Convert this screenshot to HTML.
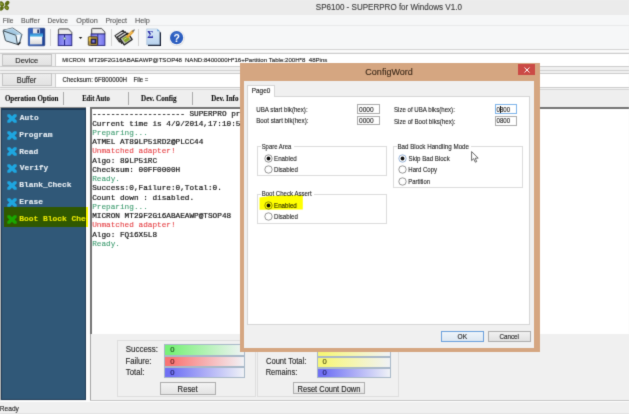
<!DOCTYPE html>
<html><head><meta charset="utf-8">
<style>
*{margin:0;padding:0;box-sizing:border-box}
html,body{width:629px;height:414px;overflow:hidden;background:#f0f0f0;font-family:"Liberation Sans",sans-serif;position:relative}
.a{position:absolute;white-space:nowrap}
svg text{white-space:pre}
</style></head><body><svg width="0" height="0" style="position:absolute"><filter id="bl" x="0" y="0" width="100%" height="100%" color-interpolation-filters="sRGB"><feConvolveMatrix order="3" kernelMatrix="0.0144 0.0912 0.0144 0.0912 0.5776 0.0912 0.0144 0.0912 0.0144" edgeMode="duplicate" preserveAlpha="true"/></filter></svg><div class="a" style="left:-4px;top:-4px;width:637px;height:422px;background:#f0f0f0;filter:url(#bl)"><div class="a" style="left:4px;top:4px;width:629px;height:414px;overflow:hidden">
<div class="a" style="left:0px;top:0px;width:629px;height:14.5px;background:#ebebeb;"></div>
<svg class="a" style="left:0;top:0" width="11" height="12" viewBox="0 0 11 12">
<ellipse cx="1.6" cy="4" rx="2.9" ry="2.2" transform="rotate(45 1.6 4)" fill="#5c6c14"/>
<ellipse cx="7.2" cy="3.2" rx="2.6" ry="1.9" transform="rotate(-45 7.2 3.2)" fill="#5c6c14"/>
<ellipse cx="1.4" cy="8.4" rx="2.6" ry="2" transform="rotate(-45 1.4 8.4)" fill="#5c6c14"/>
<ellipse cx="6.6" cy="7.6" rx="2.7" ry="2.1" transform="rotate(45 6.6 7.6)" fill="#5c6c14"/>
<ellipse cx="1.6" cy="4" rx="1.4" ry="1" transform="rotate(45 1.6 4)" fill="#8c9c2c"/>
<ellipse cx="6.6" cy="7.6" rx="1.3" ry="0.9" transform="rotate(45 6.6 7.6)" fill="#8c9c2c"/>
</svg>
<svg class="a" style="left:0;top:0;overflow:visible" width="1" height="1"><text transform="translate(315.78,9.50) scale(0.882,1)" font-family="Liberation Sans" font-weight="normal" font-size="9.13" fill="#3a3a3a" stroke="#3a3a3a" stroke-width="0.2" stroke-opacity="0.6" xml:space="preserve">SP6100 - SUPERPRO for Windows V1.0</text></svg>
<div class="a" style="left:0px;top:14.5px;width:629px;height:11px;background:#f6f7f8;"></div>
<div class="a" style="left:0px;top:25.3px;width:629px;height:1px;background:#e9eaeb;"></div>
<svg class="a" style="left:0;top:0;overflow:visible" width="1" height="1"><text transform="translate(2.67,23.20) scale(0.896,1)" font-family="Liberation Sans" font-weight="normal" font-size="7.39" fill="#5c5c5c" stroke="#5c5c5c" stroke-width="0.2" stroke-opacity="0.6" xml:space="preserve">File</text></svg>
<svg class="a" style="left:0;top:0;overflow:visible" width="1" height="1"><text transform="translate(21.03,23.20) scale(0.958,1)" font-family="Liberation Sans" font-weight="normal" font-size="7.39" fill="#5c5c5c" stroke="#5c5c5c" stroke-width="0.2" stroke-opacity="0.6" xml:space="preserve">Buffer</text></svg>
<svg class="a" style="left:0;top:0;overflow:visible" width="1" height="1"><text transform="translate(47.57,23.20) scale(0.902,1)" font-family="Liberation Sans" font-weight="normal" font-size="7.39" fill="#5c5c5c" stroke="#5c5c5c" stroke-width="0.2" stroke-opacity="0.6" xml:space="preserve">Device</text></svg>
<svg class="a" style="left:0;top:0;overflow:visible" width="1" height="1"><text transform="translate(76.31,23.20) scale(0.987,1)" font-family="Liberation Sans" font-weight="normal" font-size="7.39" fill="#5c5c5c" stroke="#5c5c5c" stroke-width="0.2" stroke-opacity="0.6" xml:space="preserve">Option</text></svg>
<svg class="a" style="left:0;top:0;overflow:visible" width="1" height="1"><text transform="translate(105.45,23.20) scale(0.936,1)" font-family="Liberation Sans" font-weight="normal" font-size="7.39" fill="#5c5c5c" stroke="#5c5c5c" stroke-width="0.2" stroke-opacity="0.6" xml:space="preserve">Project</text></svg>
<svg class="a" style="left:0;top:0;overflow:visible" width="1" height="1"><text transform="translate(134.92,23.20) scale(0.983,1)" font-family="Liberation Sans" font-weight="normal" font-size="7.39" fill="#5c5c5c" stroke="#5c5c5c" stroke-width="0.2" stroke-opacity="0.6" xml:space="preserve">Help</text></svg>
<div class="a" style="left:0px;top:26px;width:629px;height:23px;background:#f6f7f8;"></div>
<div class="a" style="left:0px;top:49px;width:629px;height:1px;background:#d4d4d4;"></div>
<div class="a" style="left:0px;top:50px;width:629px;height:1.5px;background:#fbfbfb;"></div>
<!-- toolbar icons -->
<svg class="a" style="left:0;top:26px" width="24" height="22" viewBox="0 0 24 22">
<path d="M2.9 4.5L3.7 3.9L6.9 3.4L12.2 2Q12.7 1.9 13.1 2.2L21.6 8Q22 8.3 21.9 8.8L20 15.9L17.5 18.3Z" fill="#a4c9e2" stroke="#46525c" stroke-width="0.85" stroke-linejoin="round"/>
<path d="M15.4 9L20.7 8.5L18.9 15.7L17.2 17.4Z" fill="#f6fbff"/><path d="M5 4.3L12.3 2.7L20 8" fill="none" stroke="#d8ecf8" stroke-width="0.7"/>
<path d="M3.5 4.9Q3 4.8 3.2 5.4L5.4 14.2Q5.6 14.7 6.1 14.9L17.4 18.4L16 9.7Q15.9 9.3 15.4 9.1Z" fill="#c4dff0" stroke="#36414a" stroke-width="0.95" stroke-linejoin="round"/>
<path d="M17.2 18.7L20.2 15.4L20.8 17L18.2 19.6Z" fill="#1c1c1c"/>
</svg>
<svg class="a" style="left:26px;top:26px" width="22" height="22" viewBox="0 0 22 22">
<defs><linearGradient id="fl" x1="0" x2="1"><stop offset="0" stop-color="#3a6ac8"/><stop offset="1" stop-color="#1a3e90"/></linearGradient>
<linearGradient id="fm" x1="0" y1="0" x2="0" y2="1"><stop offset="0" stop-color="#2a78c8"/><stop offset="1" stop-color="#58c8f0"/></linearGradient>
<linearGradient id="flb" x1="0" y1="0" x2="0" y2="1"><stop offset="0" stop-color="#ffffff"/><stop offset="1" stop-color="#d8d8d8"/></linearGradient></defs>
<rect x="2.3" y="2.2" width="16.5" height="17.6" rx="0.8" fill="url(#fl)" stroke="#16307a" stroke-width="0.6"/>
<rect x="4" y="7.2" width="13" height="3.6" fill="url(#fm)"/>
<rect x="6.9" y="2.4" width="6.8" height="5" fill="#e6e6ea"/>
<rect x="11.3" y="3.5" width="1.7" height="3.5" fill="#2a3a6a"/>
<rect x="4" y="10.6" width="12.2" height="7.8" fill="url(#flb)"/>
</svg>
<div class="a" style="left:50px;top:29px;width:1px;height:17px;background:#d2d2d2"></div>
<svg class="a" style="left:54px;top:26px" width="22" height="22" viewBox="0 0 22 22">
<defs><linearGradient id="pb" x1="0" x2="1"><stop offset="0" stop-color="#7070e8"/><stop offset="0.5" stop-color="#9a9af8"/><stop offset="1" stop-color="#7474ec"/></linearGradient></defs>
<path d="M4.4 8.8L4.4 3.8Q4.4 2.9 5.3 2.9L14.6 2.9L17.8 6.4L17.8 8.8Z" fill="#d4d4d4" stroke="#333" stroke-width="0.8" stroke-linejoin="round"/>
<path d="M5.6 3.9L14.2 3.9L16.6 6.6L16.6 7.8L5.6 7.8Z" fill="#ececec"/>
<rect x="4.2" y="8.7" width="13.6" height="10.9" fill="url(#pb)" stroke="#20207a" stroke-width="0.9"/>
<path d="M10.6 8.8L10.6 19.5" stroke="#1a1a8a" stroke-width="1"/>
<circle cx="10.6" cy="12.5" r="1.2" fill="#d8f0d8" stroke="#20505a" stroke-width="0.4"/>
</svg>
<svg class="a" style="left:78px;top:36px" width="5" height="4" viewBox="0 0 5 4"><path d="M0.8 1L4.3 1L2.55 3.1Z" fill="#1a1a1a"/></svg>
<svg class="a" style="left:85px;top:26px" width="22" height="22" viewBox="0 0 22 22">
<path d="M6.6 8.2L6.6 3.3Q6.6 2.4 7.5 2.4L16.6 2.4L19.9 5.9L19.9 8.2Z" fill="#d4d4d4" stroke="#333" stroke-width="0.8" stroke-linejoin="round"/>
<path d="M7.8 3.4L16.2 3.4L18.7 6.1L18.7 7.3L7.8 7.3Z" fill="#ececec"/>
<rect x="6.1" y="8" width="13.8" height="11.4" fill="url(#pb)" stroke="#20207a" stroke-width="0.9"/>
<path d="M12.8 8.1L12.8 19.3" stroke="#1a1a8a" stroke-width="0.9"/>
<rect x="3.3" y="10.8" width="9" height="8.5" rx="0.6" fill="#b89848" stroke="#3a3010" stroke-width="0.8"/>
<rect x="3.8" y="11.3" width="2.2" height="4" fill="#e8c040"/>
<rect x="6" y="13" width="5" height="4.6" fill="#2a2a70" stroke="#111" stroke-width="0.5"/>
<rect x="7.3" y="14.2" width="2.3" height="2.2" fill="#8a8ae0"/>
</svg>
<div class="a" style="left:110.5px;top:29px;width:1px;height:17px;background:#d2d2d2"></div>
<svg class="a" style="left:113px;top:26px" width="24" height="22" viewBox="0 0 24 22">
<path d="M2 9.6L10 4.4L14.2 10.4L6.4 16Z" fill="#e4e4e4" stroke="#262626" stroke-width="1.1" stroke-linejoin="round"/>
<path d="M4.3 11L12.3 5.8L16.5 11.8L8.7 17.4Z" fill="#d4d4d4" stroke="#262626" stroke-width="1.1" stroke-linejoin="round"/>
<path d="M6.8 12.4L14.8 7.2L19.2 13.4L11.2 18.9Z" fill="#bcbcbc" stroke="#1e1e1e" stroke-width="1.2" stroke-linejoin="round"/>
<path d="M9.4 12.6L14.2 9.5L17 13.4L12.2 16.6Z" fill="#88a82a"/>
<path d="M10.8 13.6L13.6 11.8" stroke="#d8e890" stroke-width="0.8"/>
<path d="M14.6 10.4L19.6 5.6" stroke="#e6a232" stroke-width="2.8" stroke-linecap="round"/>
<path d="M15 9.6L18.8 6" stroke="#f6d070" stroke-width="0.9"/>
<path d="M19.8 5.2L21.2 3.9" stroke="#707070" stroke-width="1.3" stroke-linecap="round"/>
</svg>
<div class="a" style="left:138.2px;top:29px;width:1px;height:17px;background:#d2d2d2"></div>
<svg class="a" style="left:143px;top:26px" width="20" height="22" viewBox="0 0 20 22">
<defs><linearGradient id="sg" x1="0" y1="0" x2="0" y2="1"><stop offset="0" stop-color="#dceaf8"/><stop offset="1" stop-color="#b8d2ee"/></linearGradient></defs>
<path d="M5 4L15.2 4L18 6.8L18 20L5 20Z" fill="#0e1428"/>
<path d="M3.7 2.9L14.3 2.9L16.7 5.3L16.7 18.8L3.7 18.8Z" fill="url(#sg)" stroke="#8aa8c8" stroke-width="0.4"/>
<path d="M14.3 2.9L16.7 5.3L14.3 5.3Z" fill="#5a9ad8"/>
<text x="4.3" y="11.6" font-family="Liberation Serif" font-weight="bold" font-size="9.5" fill="#2828a8">&#931;</text>
</svg>
<svg class="a" style="left:167px;top:28px" width="20" height="20" viewBox="0 0 20 20">
<circle cx="9.8" cy="10" r="8" fill="#dcdcdc"/>
<circle cx="9.6" cy="9.7" r="7.6" fill="#f8f8f8"/>
<circle cx="9.6" cy="9.7" r="6.6" fill="#2c5ec0"/>
<path d="M5 6.5Q9.6 2.5 14.2 6.5Q9.6 5 5 6.5Z" fill="#5a88d8" opacity="0.6"/>
<text x="9.6" y="13.8" text-anchor="middle" font-family="Liberation Sans" font-weight="bold" font-size="10.5" fill="#fff">?</text>
</svg>

<div class="a" style="left:0px;top:53.3px;width:629px;height:1px;background:#cdcdcd;"></div>
<div class="a" style="left:0px;top:66.3px;width:629px;height:1px;background:#cdcdcd;"></div>
<div class="a" style="left:0px;top:69.5px;width:629px;height:1px;background:#d2d2d2;"></div>
<div class="a" style="left:0px;top:73px;width:629px;height:1px;background:#cdcdcd;"></div>
<div class="a" style="left:0px;top:86.5px;width:629px;height:1px;background:#cdcdcd;"></div>
<div class="a" style="left:0px;top:89.3px;width:629px;height:1px;background:#d6d6d6;"></div>
<div class="a" style="left:55.5px;top:54px;width:573.5px;height:12.3px;background:#fff;"></div>
<div class="a" style="left:55.5px;top:74px;width:573.5px;height:12.5px;background:#fff;"></div>
<div class="a" style="left:55px;top:53px;width:1px;height:14px;background:#cdcdcd;"></div>
<div class="a" style="left:55px;top:73px;width:1px;height:14px;background:#cdcdcd;"></div>
<div class="a" style="left:2px;top:54px;width:50px;height:12.400000000000006px;background:linear-gradient(#ececec,#e2e2e2);border:1px solid #c4c4c4"></div>
<div class="a" style="left:2px;top:73.2px;width:50px;height:12.5px;background:linear-gradient(#ececec,#e2e2e2);border:1px solid #c4c4c4"></div>
<svg class="a" style="left:0;top:0;overflow:visible" width="1" height="1"><text transform="translate(15.30,63.00) scale(0.939,1)" font-family="Liberation Sans" font-weight="normal" font-size="7.97" fill="#262626" stroke="#262626" stroke-width="0.2" stroke-opacity="0.6" xml:space="preserve">Device</text></svg>
<svg class="a" style="left:0;top:0;overflow:visible" width="1" height="1"><text transform="translate(16.81,82.70) scale(0.890,1)" font-family="Liberation Sans" font-weight="normal" font-size="8.26" fill="#262626" stroke="#262626" stroke-width="0.2" stroke-opacity="0.6" xml:space="preserve">Buffer</text></svg>
<svg class="a" style="left:0;top:0;overflow:visible" width="1" height="1"><text transform="translate(62.34,62.40) scale(0.913,1)" font-family="Liberation Sans" font-weight="normal" font-size="6.23" fill="#1a1a1a" stroke="#1a1a1a" stroke-width="0.2" stroke-opacity="0.6" xml:space="preserve">MICRON</text></svg>
<svg class="a" style="left:0;top:0;overflow:visible" width="1" height="1"><text transform="translate(88.41,62.40) scale(0.978,1)" font-family="Liberation Sans" font-weight="normal" font-size="6.23" fill="#1a1a1a" stroke="#1a1a1a" stroke-width="0.2" stroke-opacity="0.6" xml:space="preserve">MT29F2G16ABAEAWP@TSOP48</text></svg>
<svg class="a" style="left:0;top:0;overflow:visible" width="1" height="1"><text transform="translate(184.91,62.40) scale(0.982,1)" font-family="Liberation Sans" font-weight="normal" font-size="6.23" fill="#1a1a1a" stroke="#1a1a1a" stroke-width="0.2" stroke-opacity="0.6" xml:space="preserve">NAND:8400000H*16+Partition Table:200H*8  48Pins</text></svg>
<svg class="a" style="left:0;top:0;overflow:visible" width="1" height="1"><text transform="translate(62.50,82.10) scale(0.893,1)" font-family="Liberation Sans" font-weight="normal" font-size="6.81" fill="#1a1a1a" stroke="#1a1a1a" stroke-width="0.2" stroke-opacity="0.6" xml:space="preserve">Checksum:</text></svg>
<svg class="a" style="left:0;top:0;overflow:visible" width="1" height="1"><text transform="translate(94.59,82.10) scale(0.915,1)" font-family="Liberation Sans" font-weight="normal" font-size="6.81" fill="#1a1a1a" stroke="#1a1a1a" stroke-width="0.2" stroke-opacity="0.6" xml:space="preserve">6F800000H</text></svg>
<svg class="a" style="left:0;top:0;overflow:visible" width="1" height="1"><text transform="translate(133.52,82.10) scale(0.875,1)" font-family="Liberation Sans" font-weight="normal" font-size="6.81" fill="#1a1a1a" stroke="#1a1a1a" stroke-width="0.2" stroke-opacity="0.6" xml:space="preserve">File =</text></svg>
<div class="a" style="left:0px;top:89.8px;width:629px;height:17.5px;background:#efefef;"></div>
<div class="a" style="left:63px;top:92px;width:1px;height:12.5px;background:#a9a9a9;"></div>
<div class="a" style="left:127.5px;top:92px;width:1px;height:12.5px;background:#a9a9a9;"></div>
<div class="a" style="left:191.5px;top:92px;width:1px;height:12.5px;background:#a9a9a9;"></div>
<svg class="a" style="left:0;top:0;overflow:visible" width="1" height="1"><text transform="translate(4.92,100.80) scale(0.931,1)" font-family="Liberation Serif" font-weight="bold" font-size="7.54" fill="#111" stroke="#111" stroke-width="0.2" stroke-opacity="0.6" xml:space="preserve">Operation Option</text></svg>
<svg class="a" style="left:0;top:0;overflow:visible" width="1" height="1"><text transform="translate(82.13,100.80) scale(0.887,1)" font-family="Liberation Serif" font-weight="bold" font-size="7.54" fill="#111" stroke="#111" stroke-width="0.2" stroke-opacity="0.6" xml:space="preserve">Edit Auto</text></svg>
<svg class="a" style="left:0;top:0;overflow:visible" width="1" height="1"><text transform="translate(141.03,100.80) scale(0.946,1)" font-family="Liberation Serif" font-weight="bold" font-size="7.54" fill="#111" stroke="#111" stroke-width="0.2" stroke-opacity="0.6" xml:space="preserve">Dev. Config</text></svg>
<svg class="a" style="left:0;top:0;overflow:visible" width="1" height="1"><text transform="translate(211.33,100.80) scale(0.924,1)" font-family="Liberation Serif" font-weight="bold" font-size="7.54" fill="#111" stroke="#111" stroke-width="0.2" stroke-opacity="0.6" xml:space="preserve">Dev. Info</text></svg>
<div class="a" style="left:0px;top:107px;width:86px;height:1px;background:#8c8c8c;"></div>
<div class="a" style="left:0px;top:107px;width:1px;height:293px;background:#a8a8a8;"></div>
<div class="a" style="left:1px;top:108px;width:85px;height:291.8px;background:#305878;border:1px solid #203c58;border-top:2px solid #1e3852"></div>
<svg class="a" style="left:6.7px;top:113.7px" width="10" height="9" viewBox="0 0 10 9"><path d="M0.3 0.8Q0.3 0.2 1 0.2L3 0.2L5 2.3L7 0.2L9 0.2Q9.7 0.2 9.7 0.8L9.7 2.6L7.6 4.5L9.7 6.4L9.7 8.2Q9.7 8.8 9 8.8L7 8.8L5 6.7L3 8.8L1 8.8Q0.3 8.8 0.3 8.2L0.3 6.4L2.4 4.5L0.3 2.6Z" fill="#1ea6e0"/></svg>
<svg class="a" style="left:0;top:0;overflow:visible" width="1" height="1"><text transform="translate(19.70,120.00) scale(1.000,1)" font-family="Liberation Mono" font-weight="bold" font-size="7.91" fill="#e8eef4" stroke="#e8eef4" stroke-width="0.2" stroke-opacity="0.6" xml:space="preserve">Auto</text></svg>
<svg class="a" style="left:6.7px;top:130.5px" width="10" height="9" viewBox="0 0 10 9"><path d="M0.3 0.8Q0.3 0.2 1 0.2L3 0.2L5 2.3L7 0.2L9 0.2Q9.7 0.2 9.7 0.8L9.7 2.6L7.6 4.5L9.7 6.4L9.7 8.2Q9.7 8.8 9 8.8L7 8.8L5 6.7L3 8.8L1 8.8Q0.3 8.8 0.3 8.2L0.3 6.4L2.4 4.5L0.3 2.6Z" fill="#1ea6e0"/></svg>
<svg class="a" style="left:0;top:0;overflow:visible" width="1" height="1"><text transform="translate(19.23,136.80) scale(1.000,1)" font-family="Liberation Mono" font-weight="bold" font-size="7.91" fill="#e8eef4" stroke="#e8eef4" stroke-width="0.2" stroke-opacity="0.6" xml:space="preserve">Program</text></svg>
<svg class="a" style="left:6.7px;top:147.3px" width="10" height="9" viewBox="0 0 10 9"><path d="M0.3 0.8Q0.3 0.2 1 0.2L3 0.2L5 2.3L7 0.2L9 0.2Q9.7 0.2 9.7 0.8L9.7 2.6L7.6 4.5L9.7 6.4L9.7 8.2Q9.7 8.8 9 8.8L7 8.8L5 6.7L3 8.8L1 8.8Q0.3 8.8 0.3 8.2L0.3 6.4L2.4 4.5L0.3 2.6Z" fill="#1ea6e0"/></svg>
<svg class="a" style="left:0;top:0;overflow:visible" width="1" height="1"><text transform="translate(19.23,153.60) scale(1.000,1)" font-family="Liberation Mono" font-weight="bold" font-size="7.91" fill="#e8eef4" stroke="#e8eef4" stroke-width="0.2" stroke-opacity="0.6" xml:space="preserve">Read</text></svg>
<svg class="a" style="left:6.7px;top:164.1px" width="10" height="9" viewBox="0 0 10 9"><path d="M0.3 0.8Q0.3 0.2 1 0.2L3 0.2L5 2.3L7 0.2L9 0.2Q9.7 0.2 9.7 0.8L9.7 2.6L7.6 4.5L9.7 6.4L9.7 8.2Q9.7 8.8 9 8.8L7 8.8L5 6.7L3 8.8L1 8.8Q0.3 8.8 0.3 8.2L0.3 6.4L2.4 4.5L0.3 2.6Z" fill="#1ea6e0"/></svg>
<svg class="a" style="left:0;top:0;overflow:visible" width="1" height="1"><text transform="translate(19.70,170.40) scale(1.000,1)" font-family="Liberation Mono" font-weight="bold" font-size="7.91" fill="#e8eef4" stroke="#e8eef4" stroke-width="0.2" stroke-opacity="0.6" xml:space="preserve">Verify</text></svg>
<svg class="a" style="left:6.7px;top:180.9px" width="10" height="9" viewBox="0 0 10 9"><path d="M0.3 0.8Q0.3 0.2 1 0.2L3 0.2L5 2.3L7 0.2L9 0.2Q9.7 0.2 9.7 0.8L9.7 2.6L7.6 4.5L9.7 6.4L9.7 8.2Q9.7 8.8 9 8.8L7 8.8L5 6.7L3 8.8L1 8.8Q0.3 8.8 0.3 8.2L0.3 6.4L2.4 4.5L0.3 2.6Z" fill="#1ea6e0"/></svg>
<svg class="a" style="left:0;top:0;overflow:visible" width="1" height="1"><text transform="translate(19.23,187.20) scale(1.000,1)" font-family="Liberation Mono" font-weight="bold" font-size="7.91" fill="#e8eef4" stroke="#e8eef4" stroke-width="0.2" stroke-opacity="0.6" xml:space="preserve">Blank_Check</text></svg>
<svg class="a" style="left:6.7px;top:197.7px" width="10" height="9" viewBox="0 0 10 9"><path d="M0.3 0.8Q0.3 0.2 1 0.2L3 0.2L5 2.3L7 0.2L9 0.2Q9.7 0.2 9.7 0.8L9.7 2.6L7.6 4.5L9.7 6.4L9.7 8.2Q9.7 8.8 9 8.8L7 8.8L5 6.7L3 8.8L1 8.8Q0.3 8.8 0.3 8.2L0.3 6.4L2.4 4.5L0.3 2.6Z" fill="#1ea6e0"/></svg>
<svg class="a" style="left:0;top:0;overflow:visible" width="1" height="1"><text transform="translate(19.23,204.00) scale(1.000,1)" font-family="Liberation Mono" font-weight="bold" font-size="7.91" fill="#e8eef4" stroke="#e8eef4" stroke-width="0.2" stroke-opacity="0.6" xml:space="preserve">Erase</text></svg>
<svg class="a" style="left:6.7px;top:214.5px" width="10" height="9" viewBox="0 0 10 9"><path d="M0.3 0.8Q0.3 0.2 1 0.2L3 0.2L5 2.3L7 0.2L9 0.2Q9.7 0.2 9.7 0.8L9.7 2.6L7.6 4.5L9.7 6.4L9.7 8.2Q9.7 8.8 9 8.8L7 8.8L5 6.7L3 8.8L1 8.8Q0.3 8.8 0.3 8.2L0.3 6.4L2.4 4.5L0.3 2.6Z" fill="#1aa61a"/></svg>
<svg class="a" style="left:0;top:0;overflow:visible" width="1" height="1"><text transform="translate(19.23,220.80) scale(1.000,1)" font-family="Liberation Mono" font-weight="bold" font-size="7.91" fill="#e8e800" stroke="#e8e800" stroke-width="0.2" stroke-opacity="0.6" xml:space="preserve">Boot Block Che</text></svg>
<div class="a" style="left:86px;top:107px;width:4px;height:293.5px;background:#fbfbfb;"></div>
<div class="a" style="left:4px;top:207.3px;width:84px;height:19.5px;background:#ffff00;mix-blend-mode:multiply"></div>
<div class="a" style="left:90px;top:107.2px;width:539px;height:226.6px;background:#fff;border-left:2px solid #747474;border-top:2px solid #747474"></div>
<div class="a" style="left:92.2px;top:110.30px;font-family:&quot;Liberation Mono&quot;,monospace;font-size:7.73px;line-height:9px;white-space:pre;-webkit-text-stroke:0.2px;color:#151515">-------------------- SUPERPRO pr</div>
<div class="a" style="left:92.2px;top:119.56px;font-family:&quot;Liberation Mono&quot;,monospace;font-size:7.73px;line-height:9px;white-space:pre;-webkit-text-stroke:0.2px;color:#151515">Current time is 4/9/2014,17:10:5</div>
<div class="a" style="left:92.2px;top:128.82px;font-family:&quot;Liberation Mono&quot;,monospace;font-size:7.73px;line-height:9px;white-space:pre;-webkit-text-stroke:0.08px;color:#3c9a6e">Preparing...</div>
<div class="a" style="left:92.2px;top:138.08px;font-family:&quot;Liberation Mono&quot;,monospace;font-size:7.73px;line-height:9px;white-space:pre;-webkit-text-stroke:0.2px;color:#151515">ATMEL AT89LP51RD2@PLCC44</div>
<div class="a" style="left:92.2px;top:147.34px;font-family:&quot;Liberation Mono&quot;,monospace;font-size:7.73px;line-height:9px;white-space:pre;-webkit-text-stroke:0.08px;color:#e43a3e">Unmatched adapter!</div>
<div class="a" style="left:92.2px;top:156.60px;font-family:&quot;Liberation Mono&quot;,monospace;font-size:7.73px;line-height:9px;white-space:pre;-webkit-text-stroke:0.2px;color:#151515">Algo: 89LP51RC</div>
<div class="a" style="left:92.2px;top:165.86px;font-family:&quot;Liberation Mono&quot;,monospace;font-size:7.73px;line-height:9px;white-space:pre;-webkit-text-stroke:0.2px;color:#151515">Checksum: 00FF0000H</div>
<div class="a" style="left:92.2px;top:175.12px;font-family:&quot;Liberation Mono&quot;,monospace;font-size:7.73px;line-height:9px;white-space:pre;-webkit-text-stroke:0.08px;color:#3c9a6e">Ready.</div>
<div class="a" style="left:92.2px;top:184.38px;font-family:&quot;Liberation Mono&quot;,monospace;font-size:7.73px;line-height:9px;white-space:pre;-webkit-text-stroke:0.2px;color:#151515">Success:0,Failure:0,Total:0.</div>
<div class="a" style="left:92.2px;top:193.64px;font-family:&quot;Liberation Mono&quot;,monospace;font-size:7.73px;line-height:9px;white-space:pre;-webkit-text-stroke:0.2px;color:#151515">Count down : disabled.</div>
<div class="a" style="left:92.2px;top:202.90px;font-family:&quot;Liberation Mono&quot;,monospace;font-size:7.73px;line-height:9px;white-space:pre;-webkit-text-stroke:0.08px;color:#3c9a6e">Preparing...</div>
<div class="a" style="left:92.2px;top:212.16px;font-family:&quot;Liberation Mono&quot;,monospace;font-size:7.73px;line-height:9px;white-space:pre;-webkit-text-stroke:0.2px;color:#151515">MICRON MT29F2G16ABAEAWP@TSOP48</div>
<div class="a" style="left:92.2px;top:221.42px;font-family:&quot;Liberation Mono&quot;,monospace;font-size:7.73px;line-height:9px;white-space:pre;-webkit-text-stroke:0.08px;color:#e43a3e">Unmatched adapter!</div>
<div class="a" style="left:92.2px;top:230.68px;font-family:&quot;Liberation Mono&quot;,monospace;font-size:7.73px;line-height:9px;white-space:pre;-webkit-text-stroke:0.2px;color:#151515">Algo: FQ16X5L8</div>
<div class="a" style="left:92.2px;top:239.94px;font-family:&quot;Liberation Mono&quot;,monospace;font-size:7.73px;line-height:9px;white-space:pre;-webkit-text-stroke:0.08px;color:#3c9a6e">Ready.</div>
<div class="a" style="left:90px;top:333.8px;width:539px;height:67px;background:#f0f0f0;border-left:1px solid #a4a4a4"></div>
<div class="a" style="left:117px;top:340.3px;width:138.5px;height:57px;background:transparent;border:1px solid #dedede"></div>
<div class="a" style="left:257px;top:340.3px;width:141.5px;height:57px;background:transparent;border:1px solid #dedede"></div>
<div class="a" style="left:164.2px;top:344.2px;width:80.5px;height:11.5px;background:linear-gradient(to right,#78f078 0%,#78f078 8%,color-mix(in srgb,#78f078 55%,#f4f4f8) 50%,#f0f2f6 100%);border:1px solid #a8b8c8"></div>
<div class="a" style="left:164.2px;top:355.7px;width:80.5px;height:11.7px;background:linear-gradient(to right,#f87474 0%,#f87474 8%,color-mix(in srgb,#f87474 55%,#f4f4f8) 50%,#f0f2f6 100%);border:1px solid #a8b8c8"></div>
<div class="a" style="left:164.2px;top:367.4px;width:80.5px;height:11px;background:linear-gradient(to right,#7070f4 0%,#7070f4 8%,color-mix(in srgb,#7070f4 55%,#f4f4f8) 50%,#f0f2f6 100%);border:1px solid #a8b8c8"></div>
<div class="a" style="left:317.4px;top:345px;width:73.2px;height:11.7px;background:linear-gradient(to right,#f6f678 0%,#f6f678 8%,color-mix(in srgb,#f6f678 55%,#f4f4f8) 50%,#f0f2f6 100%);border:1px solid #a8b8c8"></div>
<div class="a" style="left:317.4px;top:356.7px;width:73.2px;height:11.1px;background:linear-gradient(to right,#f6f678 0%,#f6f678 8%,color-mix(in srgb,#f6f678 55%,#f4f4f8) 50%,#f0f2f6 100%);border:1px solid #a8b8c8"></div>
<div class="a" style="left:317.4px;top:367.8px;width:73.2px;height:10.5px;background:linear-gradient(to right,#7070f4 0%,#7070f4 8%,color-mix(in srgb,#7070f4 55%,#f4f4f8) 50%,#f0f2f6 100%);border:1px solid #a8b8c8"></div>
<svg class="a" style="left:0;top:0;overflow:visible" width="1" height="1"><text transform="translate(125.68,352.10) scale(0.951,1)" font-family="Liberation Sans" font-weight="normal" font-size="8.41" fill="#262626" stroke="#262626" stroke-width="0.2" stroke-opacity="0.6" xml:space="preserve">Success:</text></svg>
<svg class="a" style="left:0;top:0;overflow:visible" width="1" height="1"><text transform="translate(125.38,363.90) scale(0.928,1)" font-family="Liberation Sans" font-weight="normal" font-size="8.41" fill="#262626" stroke="#262626" stroke-width="0.2" stroke-opacity="0.6" xml:space="preserve">Failure:</text></svg>
<svg class="a" style="left:0;top:0;overflow:visible" width="1" height="1"><text transform="translate(125.84,375.30) scale(0.923,1)" font-family="Liberation Sans" font-weight="normal" font-size="8.41" fill="#262626" stroke="#262626" stroke-width="0.2" stroke-opacity="0.6" xml:space="preserve">Total:</text></svg>
<svg class="a" style="left:0;top:0;overflow:visible" width="1" height="1"><text transform="translate(265.92,363.90) scale(0.891,1)" font-family="Liberation Sans" font-weight="normal" font-size="8.55" fill="#262626" stroke="#262626" stroke-width="0.2" stroke-opacity="0.6" xml:space="preserve">Count Total:</text></svg>
<svg class="a" style="left:0;top:0;overflow:visible" width="1" height="1"><text transform="translate(265.70,375.30) scale(0.879,1)" font-family="Liberation Sans" font-weight="normal" font-size="8.55" fill="#262626" stroke="#262626" stroke-width="0.2" stroke-opacity="0.6" xml:space="preserve">Remains:</text></svg>
<svg class="a" style="left:0;top:0;overflow:visible" width="1" height="1"><text transform="translate(170.27,352.10) scale(1.000,1)" font-family="Liberation Sans" font-weight="normal" font-size="7.68" fill="#1a4a1a" stroke="#1a4a1a" stroke-width="0.2" stroke-opacity="0.6" xml:space="preserve">0</text></svg>
<svg class="a" style="left:0;top:0;overflow:visible" width="1" height="1"><text transform="translate(170.27,363.90) scale(1.000,1)" font-family="Liberation Sans" font-weight="normal" font-size="7.68" fill="#5a1a1a" stroke="#5a1a1a" stroke-width="0.2" stroke-opacity="0.6" xml:space="preserve">0</text></svg>
<svg class="a" style="left:0;top:0;overflow:visible" width="1" height="1"><text transform="translate(170.27,375.30) scale(1.000,1)" font-family="Liberation Sans" font-weight="normal" font-size="7.68" fill="#1a1a5a" stroke="#1a1a5a" stroke-width="0.2" stroke-opacity="0.6" xml:space="preserve">0</text></svg>
<svg class="a" style="left:0;top:0;overflow:visible" width="1" height="1"><text transform="translate(322.47,363.90) scale(1.000,1)" font-family="Liberation Sans" font-weight="normal" font-size="7.68" fill="#4a4a10" stroke="#4a4a10" stroke-width="0.2" stroke-opacity="0.6" xml:space="preserve">0</text></svg>
<svg class="a" style="left:0;top:0;overflow:visible" width="1" height="1"><text transform="translate(322.47,375.30) scale(1.000,1)" font-family="Liberation Sans" font-weight="normal" font-size="7.68" fill="#1a1a5a" stroke="#1a1a5a" stroke-width="0.2" stroke-opacity="0.6" xml:space="preserve">0</text></svg>
<div class="a" style="left:160.2px;top:382.4px;width:55.7px;height:12.3px;background:linear-gradient(#f3f3f3,#e3e3e3);border:1px solid #adadad"></div>
<svg class="a" style="left:0;top:0;overflow:visible" width="1" height="1"><text transform="translate(177.58,391.50) scale(0.931,1)" font-family="Liberation Sans" font-weight="normal" font-size="8.26" fill="#222" stroke="#222" stroke-width="0.2" stroke-opacity="0.6" xml:space="preserve">Reset</text></svg>
<div class="a" style="left:293.2px;top:382.2px;width:72.3px;height:12.3px;background:linear-gradient(#f3f3f3,#e3e3e3);border:1px solid #adadad"></div>
<svg class="a" style="left:0;top:0;overflow:visible" width="1" height="1"><text transform="translate(297.60,392.00) scale(0.861,1)" font-family="Liberation Sans" font-weight="normal" font-size="8.70" fill="#222" stroke="#222" stroke-width="0.2" stroke-opacity="0.6" xml:space="preserve">Reset Count Down</text></svg>
<div class="a" style="left:90px;top:400px;width:539px;height:1px;background:#c6c6c6;"></div>
<div class="a" style="left:0px;top:401px;width:629px;height:1.2px;background:#fdfdfd;"></div>
<div class="a" style="left:0px;top:413.2px;width:629px;height:1px;background:#e2e2e2;"></div>
<svg class="a" style="left:0;top:0;overflow:visible" width="1" height="1"><text transform="translate(-0.23,411.20) scale(0.830,1)" font-family="Liberation Sans" font-weight="normal" font-size="7.97" fill="#222" stroke="#222" stroke-width="0.2" stroke-opacity="0.6" xml:space="preserve">Ready</text></svg>
<div class="a" style="left:239.7px;top:63px;width:299.9px;height:288.5px;background:#d5a681;"></div>
<svg class="a" style="left:0;top:0;overflow:visible" width="1" height="1"><text transform="translate(365.35,75.10) scale(0.972,1)" font-family="Liberation Sans" font-weight="normal" font-size="9.28" fill="#3a2818" stroke="#3a2818" stroke-width="0.2" stroke-opacity="0.6" xml:space="preserve">ConfigWord</text></svg>
<div class="a" style="left:517.5px;top:64px;width:17.6px;height:10.8px;background:#cb4a45;"></div>
<svg class="a" style="left:523.6px;top:66.6px" width="6" height="6" viewBox="0 0 6 6"><path d="M0.5 0.5L5.5 5.5M5.5 0.5L0.5 5.5" stroke="#fff" stroke-width="0.95"/></svg>
<div class="a" style="left:243.8px;top:80.6px;width:290.6px;height:267px;background:#f0f0f0;"></div>
<div class="a" style="left:247.2px;top:96.2px;width:283px;height:229.2px;background:#fff;border:1px solid #d6d6d6"></div>
<div class="a" style="left:247.2px;top:85.1px;width:27.7px;height:12px;background:#fff;border:1px solid #d6d6d6;border-bottom:none"></div>
<svg class="a" style="left:0;top:0;overflow:visible" width="1" height="1"><text transform="translate(251.79,92.60) scale(0.903,1)" font-family="Liberation Sans" font-weight="normal" font-size="7.10" fill="#222" stroke="#222" stroke-width="0.2" stroke-opacity="0.6" xml:space="preserve">Page0</text></svg>
<svg class="a" style="left:0;top:0;overflow:visible" width="1" height="1"><text transform="translate(256.27,111.90) scale(0.819,1)" font-family="Liberation Sans" font-weight="normal" font-size="7.54" fill="#262626" stroke="#262626" stroke-width="0.2" stroke-opacity="0.6" xml:space="preserve">UBA start blk(hex):</text></svg>
<svg class="a" style="left:0;top:0;overflow:visible" width="1" height="1"><text transform="translate(256.20,123.30) scale(0.828,1)" font-family="Liberation Sans" font-weight="normal" font-size="7.54" fill="#262626" stroke="#262626" stroke-width="0.2" stroke-opacity="0.6" xml:space="preserve">Boot start blk(hex):</text></svg>
<svg class="a" style="left:0;top:0;overflow:visible" width="1" height="1"><text transform="translate(393.95,112.00) scale(0.813,1)" font-family="Liberation Sans" font-weight="normal" font-size="7.54" fill="#262626" stroke="#262626" stroke-width="0.2" stroke-opacity="0.6" xml:space="preserve">Size of UBA blks(hex):</text></svg>
<svg class="a" style="left:0;top:0;overflow:visible" width="1" height="1"><text transform="translate(393.95,123.60) scale(0.818,1)" font-family="Liberation Sans" font-weight="normal" font-size="7.54" fill="#262626" stroke="#262626" stroke-width="0.2" stroke-opacity="0.6" xml:space="preserve">Size of Boot blks(hex):</text></svg>
<div class="a" style="left:357.2px;top:104.2px;width:22.6px;height:9.6px;background:#fff;border:1px solid #ababab"></div>
<div class="a" style="left:357.2px;top:115.9px;width:22.6px;height:9.6px;background:#fff;border:1px solid #ababab"></div>
<div class="a" style="left:495.1px;top:104.2px;width:21.7px;height:9.9px;background:#fff;border:1px solid #7eb4ea"></div>
<div class="a" style="left:495.1px;top:116.1px;width:21.7px;height:9.6px;background:#fff;border:1px solid #ababab"></div>
<svg class="a" style="left:0;top:0;overflow:visible" width="1" height="1"><text transform="translate(359.00,111.70) scale(0.841,1)" font-family="Liberation Sans" font-weight="normal" font-size="7.83" fill="#222" stroke="#222" stroke-width="0.2" stroke-opacity="0.6" xml:space="preserve">0000</text></svg>
<svg class="a" style="left:0;top:0;overflow:visible" width="1" height="1"><text transform="translate(359.00,123.10) scale(0.841,1)" font-family="Liberation Sans" font-weight="normal" font-size="7.83" fill="#222" stroke="#222" stroke-width="0.2" stroke-opacity="0.6" xml:space="preserve">0000</text></svg>
<svg class="a" style="left:0;top:0;overflow:visible" width="1" height="1"><text transform="translate(496.52,112.00) scale(0.781,1)" font-family="Liberation Sans" font-weight="normal" font-size="7.83" fill="#222" stroke="#222" stroke-width="0.2" stroke-opacity="0.6" xml:space="preserve">0800</text></svg>
<svg class="a" style="left:0;top:0;overflow:visible" width="1" height="1"><text transform="translate(496.52,123.30) scale(0.781,1)" font-family="Liberation Sans" font-weight="normal" font-size="7.83" fill="#222" stroke="#222" stroke-width="0.2" stroke-opacity="0.6" xml:space="preserve">0800</text></svg>
<div class="a" style="left:500.1px;top:106.2px;width:0.8px;height:6.5px;background:#111;"></div>
<div class="a" style="left:256.5px;top:146.2px;width:130.3px;height:29.8px;background:transparent;border:1px solid #dcdcdc"></div>
<div class="a" style="left:256.5px;top:193.5px;width:130.3px;height:30px;background:transparent;border:1px solid #dcdcdc"></div>
<div class="a" style="left:392.5px;top:146px;width:130px;height:42px;background:transparent;border:1px solid #dcdcdc"></div>
<div class="a" style="left:260.5px;top:142px;width:33px;height:8px;background:#fff;"></div>
<div class="a" style="left:260.5px;top:190px;width:53px;height:8px;background:#fff;"></div>
<div class="a" style="left:396.5px;top:142px;width:74px;height:8px;background:#fff;"></div>
<svg class="a" style="left:0;top:0;overflow:visible" width="1" height="1"><text transform="translate(261.66,148.80) scale(0.819,1)" font-family="Liberation Sans" font-weight="normal" font-size="7.25" fill="#262626" stroke="#262626" stroke-width="0.2" stroke-opacity="0.6" xml:space="preserve">Spare Area</text></svg>
<svg class="a" style="left:0;top:0;overflow:visible" width="1" height="1"><text transform="translate(261.71,196.00) scale(0.838,1)" font-family="Liberation Sans" font-weight="normal" font-size="7.25" fill="#262626" stroke="#262626" stroke-width="0.2" stroke-opacity="0.6" xml:space="preserve">Boot Check Assert</text></svg>
<svg class="a" style="left:0;top:0;overflow:visible" width="1" height="1"><text transform="translate(397.40,148.80) scale(0.860,1)" font-family="Liberation Sans" font-weight="normal" font-size="7.25" fill="#262626" stroke="#262626" stroke-width="0.2" stroke-opacity="0.6" xml:space="preserve">Bad Block Handling Mode</text></svg>
<svg class="a" style="left:264.1px;top:153.8px" width="9" height="9" viewBox="0 0 9 9"><circle cx="4.5" cy="4.5" r="3.7" fill="#fff" stroke="#6a6a6a" stroke-width="0.7"/><circle cx="4.5" cy="4.5" r="1.9" fill="#111"/></svg>
<svg class="a" style="left:0;top:0;overflow:visible" width="1" height="1"><text transform="translate(274.00,160.70) scale(0.826,1)" font-family="Liberation Sans" font-weight="normal" font-size="7.54" fill="#262626" stroke="#262626" stroke-width="0.2" stroke-opacity="0.6" xml:space="preserve">Enabled</text></svg>
<svg class="a" style="left:264.1px;top:165.4px" width="9" height="9" viewBox="0 0 9 9"><circle cx="4.5" cy="4.5" r="3.7" fill="#fff" stroke="#6a6a6a" stroke-width="0.7"/></svg>
<svg class="a" style="left:0;top:0;overflow:visible" width="1" height="1"><text transform="translate(274.01,172.30) scale(0.813,1)" font-family="Liberation Sans" font-weight="normal" font-size="7.54" fill="#262626" stroke="#262626" stroke-width="0.2" stroke-opacity="0.6" xml:space="preserve">Disabled</text></svg>
<svg class="a" style="left:264.0px;top:200.8px" width="9" height="9" viewBox="0 0 9 9"><circle cx="4.5" cy="4.5" r="3.7" fill="#fff" stroke="#6a6a6a" stroke-width="0.7"/><circle cx="4.5" cy="4.5" r="1.9" fill="#111"/></svg>
<svg class="a" style="left:0;top:0;overflow:visible" width="1" height="1"><text transform="translate(274.00,207.90) scale(0.826,1)" font-family="Liberation Sans" font-weight="normal" font-size="7.54" fill="#262626" stroke="#262626" stroke-width="0.2" stroke-opacity="0.6" xml:space="preserve">Enabled</text></svg>
<svg class="a" style="left:264.0px;top:212.4px" width="9" height="9" viewBox="0 0 9 9"><circle cx="4.5" cy="4.5" r="3.7" fill="#fff" stroke="#6a6a6a" stroke-width="0.7"/></svg>
<svg class="a" style="left:0;top:0;overflow:visible" width="1" height="1"><text transform="translate(274.01,219.40) scale(0.813,1)" font-family="Liberation Sans" font-weight="normal" font-size="7.54" fill="#262626" stroke="#262626" stroke-width="0.2" stroke-opacity="0.6" xml:space="preserve">Disabled</text></svg>
<svg class="a" style="left:398.2px;top:153.9px" width="9" height="9" viewBox="0 0 9 9"><circle cx="4.5" cy="4.5" r="3.7" fill="#fff" stroke="#7096c8" stroke-width="0.7"/><circle cx="4.5" cy="4.5" r="1.9" fill="#111"/></svg>
<svg class="a" style="left:0;top:0;overflow:visible" width="1" height="1"><text transform="translate(408.56,161.20) scale(0.813,1)" font-family="Liberation Sans" font-weight="normal" font-size="7.54" fill="#262626" stroke="#262626" stroke-width="0.2" stroke-opacity="0.6" xml:space="preserve">Skip Bad Block</text></svg>
<svg class="a" style="left:398.2px;top:165.3px" width="9" height="9" viewBox="0 0 9 9"><circle cx="4.5" cy="4.5" r="3.7" fill="#fff" stroke="#6a6a6a" stroke-width="0.7"/></svg>
<svg class="a" style="left:0;top:0;overflow:visible" width="1" height="1"><text transform="translate(408.32,172.40) scale(0.799,1)" font-family="Liberation Sans" font-weight="normal" font-size="7.54" fill="#262626" stroke="#262626" stroke-width="0.2" stroke-opacity="0.6" xml:space="preserve">Hard Copy</text></svg>
<svg class="a" style="left:398.2px;top:176.8px" width="9" height="9" viewBox="0 0 9 9"><circle cx="4.5" cy="4.5" r="3.7" fill="#fff" stroke="#6a6a6a" stroke-width="0.7"/></svg>
<svg class="a" style="left:0;top:0;overflow:visible" width="1" height="1"><text transform="translate(408.33,183.80) scale(0.785,1)" font-family="Liberation Sans" font-weight="normal" font-size="7.54" fill="#262626" stroke="#262626" stroke-width="0.2" stroke-opacity="0.6" xml:space="preserve">Partition</text></svg>
<svg class="a" style="left:0;top:0;mix-blend-mode:multiply" width="629" height="414"><path d="M259.5 197.5L270 196L290 195.3L302.8 195.2L302.8 209.6L259.5 209.8Z" fill="#ffff00"/></svg>
<svg class="a" style="left:471px;top:151px" width="9" height="12" viewBox="0 0 9 12"><path d="M0.6 0.6L0.6 9.6L2.7 7.7L4.3 11.2L5.7 10.6L4.2 7.2L7.2 7.1Z" fill="#fff" stroke="#3a3a3a" stroke-width="0.75" stroke-linejoin="round"/></svg>
<div class="a" style="left:441.4px;top:330.9px;width:42.4px;height:11.6px;background:linear-gradient(#eef4fa,#dce7f2);border:1px solid #6aa0dc"></div>
<svg class="a" style="left:0;top:0;overflow:visible" width="1" height="1"><text transform="translate(457.54,339.40) scale(0.908,1)" font-family="Liberation Sans" font-weight="normal" font-size="7.25" fill="#222" stroke="#222" stroke-width="0.2" stroke-opacity="0.6" xml:space="preserve">OK</text></svg>
<div class="a" style="left:488.1px;top:330.9px;width:42.6px;height:11.6px;background:linear-gradient(#f1f1f1,#e1e1e1);border:1px solid #adadad"></div>
<svg class="a" style="left:0;top:0;overflow:visible" width="1" height="1"><text transform="translate(499.49,339.40) scale(0.865,1)" font-family="Liberation Sans" font-weight="normal" font-size="7.25" fill="#222" stroke="#222" stroke-width="0.2" stroke-opacity="0.6" xml:space="preserve">Cancel</text></svg>
</div></div></body></html>
